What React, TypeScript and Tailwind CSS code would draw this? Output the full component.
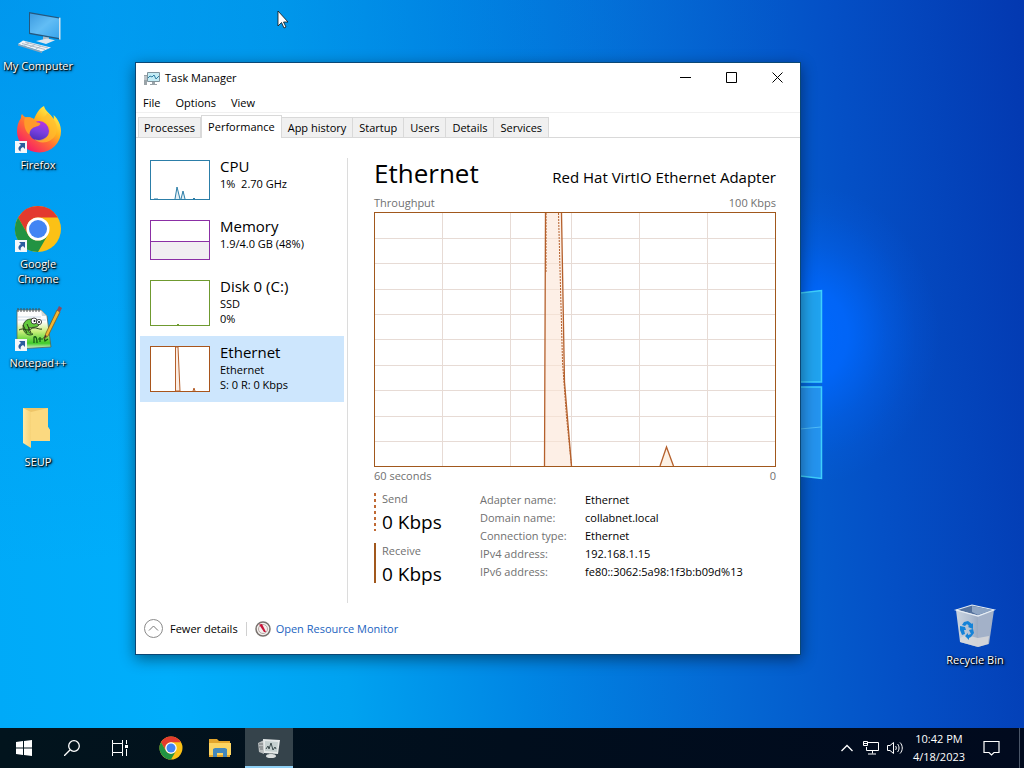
import React from 'react';

const tabs = ['Processes', 'Performance', 'App history', 'Startup', 'Users', 'Details', 'Services'];

const adapterInfo = [
  { label: 'Adapter name:', value: 'Ethernet' },
  { label: 'Domain name:', value: 'collabnet.local' },
  { label: 'Connection type:', value: 'Ethernet' },
  { label: 'IPv4 address:', value: '192.168.1.15' },
  { label: 'IPv6 address:', value: 'fe80::3062:5a98:1f3b:b09d%13' },
];

/* ---------- icons ---------- */

const ShortcutArrow: React.FC = () => (
  <g>
    <rect x="1" y="35" width="12" height="12" fill="#f4f7fa" />
    <path d="M5 37h6v6l-2-2c-2 .8-2.600 2-2.400 4.500C3.800 44 3.600 41 7 39z" fill="#2b5c9e" />
  </g>
);

const ChromeShape: React.FC = () => (
  <g>
    <circle cx="24" cy="24" r="23" fill="#fbc116" />
    <path d="M4.080 12.500A23 23 0 0 1 43.920 12.500H24A11.500 11.500 0 0 0 14.040 29.750z" fill="#e33b2e" />
    <path d="M4.080 12.500A23 23 0 0 0 24 47L33.960 29.750A11.500 11.500 0 0 1 14.040 29.750z" fill="#229342" />
    <circle cx="24" cy="24" r="11.500" fill="#fff" />
    <circle cx="24" cy="24" r="9" fill="#4285f4" />
  </g>
);

const ComputerIcon: React.FC = () => (
  <svg viewBox="0 0 48 48" className="h-12 w-12">
    <defs>
      <linearGradient id="screen" x1="0" y1="0" x2="1" y2="1">
        <stop offset="0" stopColor="#3d9be0" />
        <stop offset="0.500" stopColor="#62bdf5" />
        <stop offset="1" stopColor="#3aa5ec" />
      </linearGradient>
    </defs>
    <path d="M15 5l31 5.500v22L15 27z" fill="#24587f" />
    <path d="M16 6.500l29 5v19.500L16 25.700z" fill="url(#screen)" />
    <path d="M45 10.500l1.500.3v22l-1.500-.3z" fill="#d5e3ec" />
    <path d="M29 29.500l6 1v3.500l-6-1z" fill="#aebbc6" />
    <path d="M22 34l11-2.500 8 1.800-9 3.700z" fill="#dce6ee" />
    <path d="M9 33.500l28 7-9 4L4 37z" fill="#eef2f6" />
    <path d="M4 37l24 7.500v1.500L4 38.500z" fill="#8fa5b8" />
    <path d="M11 35l23 6M8 36.500l23 6M15 36l-5 2.500M21 37.500l-5 2.500M27 39l-5 3" stroke="#9fb0bf" strokeWidth="0.800" />
  </svg>
);

const FirefoxIcon: React.FC = () => (
  <svg viewBox="0 0 48 48" className="h-12 w-12">
    <defs>
      <linearGradient id="fox" x1="0.850" y1="0.100" x2="0.200" y2="0.950">
        <stop offset="0" stopColor="#fff44f" />
        <stop offset="0.350" stopColor="#ffb21f" />
        <stop offset="0.600" stopColor="#ff6b36" />
        <stop offset="1" stopColor="#f5156c" />
      </linearGradient>
      <linearGradient id="globe" x1="0.600" y1="0" x2="0.300" y2="1">
        <stop offset="0" stopColor="#b833e1" />
        <stop offset="0.500" stopColor="#7a3fe0" />
        <stop offset="1" stopColor="#4a2fb5" />
      </linearGradient>
    </defs>
    <path d="M30 0c1 5 7 8 9.500 13 .5-1 .3-2.500 0-4 4.500 4 7.500 10 7.500 16A22 21 0 0 1 3 26c0-6 1-10 4-14 0-1 0-3 1-4 1 2 3 3 4 3.500 3-.5 6 0 8 1.500C22 9 24 3 30 0z" fill="url(#fox)" />
    <circle cx="25" cy="25" r="10" fill="url(#globe)" />
    <path d="M11 11.500c5-1 9 1 12 5 2 0 3 .5 3.500 1.500-1.500 2.500-5 2.500-7 3.500-2 1.500-4 3-4 7C11 26 9 17 11 11.500z" fill="#ff9a2a" />
    <path d="M26 14c4-2 10 2 10 9 0 8-8 13-16 10 6 6 18 4 22-5 3-8-2-17-9-21-1 4-5 4-7 7z" fill="#ffbd2e" opacity="0.700" />
    <ShortcutArrow />
  </svg>
);

const ChromeIcon: React.FC = () => (
  <svg viewBox="0 0 48 48" className="h-12 w-12">
    <ChromeShape />
    <ShortcutArrow />
  </svg>
);

const NotepadIcon: React.FC = () => (
  <svg viewBox="0 0 48 48" className="h-12 w-12">
    <defs>
      <linearGradient id="page" x1="0" y1="0" x2="0" y2="1">
        <stop offset="0.300" stopColor="#fdfdfd" />
        <stop offset="0.550" stopColor="#c9ef7a" />
        <stop offset="0.850" stopColor="#3ecb2b" />
        <stop offset="1" stopColor="#e8f6e0" />
      </linearGradient>
    </defs>
    <path d="M3 6h24l6 6 4 31-34 2z" fill="url(#page)" stroke="#55645a" strokeWidth="0.800" />
    <path d="M27 6l1 6h5z" fill="#cfd8d8" />
    <path d="M4 8V4M7 8V4M10 8V4M13 8V4M16 8V4M19 8V4M22 8V4M25 8V4" stroke="#4a4f55" strokeWidth="1" />
    <path d="M4 13h23M4 16h28" stroke="#b9c8dd" strokeWidth="0.700" />
    <path d="M21 16c-6-3-12 1-12 7s6 10 10 7c-4 0-5-3-4-6 3-1 8 0 10-3z" fill="#62c83d" stroke="#20351c" strokeWidth="0.800" />
    <circle cx="20" cy="17" r="3" fill="#fff" stroke="#222" strokeWidth="0.800" />
    <circle cx="25" cy="18" r="2.600" fill="#fff" stroke="#222" strokeWidth="0.800" />
    <circle cx="20.500" cy="17" r="1" fill="#111" />
    <circle cx="25" cy="18" r="1" fill="#111" />
    <path d="M5 26c5-3 8 2 12-1s8 1 11 0M9 21l4 8M13 20l4 9" fill="none" stroke="#263a17" />
    <path d="M20 39v-6c2-1 3 1 3 6M26 33v5M24 35h5M30 33l1 4 3-2" fill="none" stroke="#0e5714" strokeWidth="1.200" />
    <path d="M30 35l2-6L43 6l3 2-12 24z" fill="#f2b632" stroke="#7b5a1c" strokeWidth="0.800" />
    <path d="M43 6l2-4 3 2-2 4z" fill="#8d4c5f" />
    <path d="M30 35l1-4 2 1z" fill="#333" />
    <ShortcutArrow />
  </svg>
);

const FolderIcon: React.FC = () => (
  <svg viewBox="0 0 48 48" className="h-12 w-12">
    <defs>
      <linearGradient id="folderFront" x1="0" y1="0" x2="1" y2="0">
        <stop offset="0" stopColor="#ffe9a6" />
        <stop offset="1" stopColor="#f7d377" />
      </linearGradient>
    </defs>
    <path d="M9 5h25v19l2 3v11H16z" fill="#eec568" />
    <path d="M17 9l17-4v19l2 3v11H17z" fill="#fbd980" />
    <path d="M9 5l8 4v36l-8-5z" fill="url(#folderFront)" />
  </svg>
);

const RecycleIcon: React.FC = () => (
  <svg viewBox="0 0 48 48" className="h-12 w-12">
    <defs>
      <linearGradient id="bin" x1="0" y1="0" x2="1" y2="0">
        <stop offset="0" stopColor="#c9d3df" />
        <stop offset="0.600" stopColor="#b4c1d3" />
        <stop offset="1" stopColor="#9cabc2" />
      </linearGradient>
    </defs>
    <path d="M5 9l16-5 22 5-16 6z" fill="#54719c" stroke="#e3ebf3" strokeWidth="1.200" />
    <path d="M21 5v6l6 3 15-5z" fill="#8ea5c4" />
    <path d="M5 9l22 6v31L9 41z" fill="url(#bin)" />
    <path d="M27 15l16-6-5 34-11 3z" fill="#a3b1c8" />
    <path d="M9 37l6-3 12 3 11-2-1 8-10 3-18-5z" fill="#dcdcdc" opacity="0.800" />
    <path d="M5 9l22 6 16-6" fill="none" stroke="#e8eef5" strokeWidth="1.200" />
    <g fill="#1583d8">
      <path d="M13 21l4-1 4 3 1-1 0 6-5-2 1-1-2-2-2 2-3-1z" />
      <path d="M9 25l5 1 1 3-2 0 1 4-3 1-2-5z" />
      <path d="M18 29l4-1 1 4-3 4-2 1v2l-4-4 3-3v2l3-1z" />
    </g>
  </svg>
);

const AppIcon: React.FC = () => (
  <svg viewBox="0 0 16 16" className="h-4 w-4">
    <path d="M0 5h3v10H0z" fill="#9aa3a8" />
    <path d="M0 7h3M0 9h3" stroke="#e3e7ea" />
    <path d="M3.500 2.500h12v9h-12z" fill="#c4ecf5" stroke="#80939c" />
    <path d="M4 8l2-2 2 1 2-2 2 4 3-3" fill="none" stroke="#2f7ea3" />
    <path d="M8 12h3v2h2v1H6v-1h2z" fill="#9aa3a8" />
  </svg>
);

const TaskManagerIcon: React.FC = () => (
  <svg viewBox="0 0 24 24" className="h-6 w-6">
    <path d="M1 7l6-3v14l-5-2z" fill="#b9bdbe" />
    <path d="M2 8h4M2 11h4M3 13h3" stroke="#6f7577" />
    <path d="M6 3l17 1-2 14-14-1z" fill="#e5e9e9" />
    <path d="M8 5l13 1-1 10-12-1z" fill="#c5d0d0" />
    <path d="M9 13l2-3 1 3 2-6 2 7 2-3 1 2" fill="none" stroke="#3c4b4d" />
    <path d="M12 17h4v2h-4z" fill="#909899" />
    <ellipse cx="14" cy="20" rx="5" ry="2" fill="#dce0e0" />
  </svg>
);

const ExplorerIcon: React.FC = () => (
  <svg viewBox="0 0 24 24" className="h-6 w-6">
    <path d="M1 4V3h8l2 2h11v16H1z" fill="#e3a52c" />
    <path d="M1 7h22v12H1z" fill="#fcd462" />
    <path d="M5 21v-8l2-1h10l2 1v8h-4v-4H9v4z" fill="#4287bd" />
  </svg>
);

/* ---------- desktop ---------- */

const DesktopIcon: React.FC<{ label: string; children: React.ReactNode }> = ({ label, children }) => (
  <button
    type="button"
    className="flex w-[76px] flex-col items-center text-center text-[11px] leading-[15px] text-white [text-shadow:1px_1px_1px_#000,1px_1px_3px_#000,0_0_2px_rgba(0,0,0,0.6)]"
  >
    {children}
    <span className="mt-[3px] whitespace-pre-line">{label}</span>
  </button>
);

const desktopItems = [
  { label: 'My Computer', icon: <ComputerIcon /> },
  { label: 'Firefox', icon: <FirefoxIcon /> },
  { label: 'Google\nChrome', icon: <ChromeIcon /> },
  { label: 'Notepad++', icon: <NotepadIcon /> },
  { label: 'SEUP', icon: <FolderIcon /> },
];

/* ---------- task manager ---------- */

const resources = [
  {
    name: 'CPU',
    lines: ['1%  2.70 GHz'],
    graph: (
      <svg viewBox="0 0 60 40" className="h-10 w-[60px]">
        <rect x="0.500" y="0.500" width="59" height="39" fill="#fff" stroke="#2c7ea8" />
        <path d="M25 39l2-12 3 12M31 39l2-8 2 8M4 39h4M43 39l1-1 1 1" fill="#e3f0f6" stroke="#2c7ea8" />
      </svg>
    ),
  },
  {
    name: 'Memory',
    lines: ['1.9/4.0 GB (48%)'],
    graph: (
      <svg viewBox="0 0 60 40" className="h-10 w-[60px]">
        <rect x="0.500" y="0.500" width="59" height="39" fill="#fff" stroke="#8b2fa5" />
        <rect x="1" y="22" width="58" height="17" fill="#f1eef2" />
        <path d="M1 21.500h58" stroke="#8b2fa5" />
      </svg>
    ),
  },
  {
    name: 'Disk 0 (C:)',
    lines: ['SSD', '0%'],
    graph: (
      <svg viewBox="0 0 60 46" className="h-[46px] w-[60px]">
        <rect x="0.500" y="0.500" width="59" height="45" fill="#fff" stroke="#6f9a30" />
        <path d="M27 45l1-1 1 1" fill="none" stroke="#6f9a30" />
      </svg>
    ),
  },
  {
    name: 'Ethernet',
    lines: ['Ethernet', 'S: 0 R: 0 Kbps'],
    graph: (
      <svg viewBox="0 0 60 46" className="h-[46px] w-[60px]">
        <rect x="0.500" y="0.500" width="59" height="45" fill="#fff" stroke="#a8551c" />
        <path d="M25.500 45V1h2.500l2 44z" fill="#fdeee4" stroke="#b5602c" />
        <path d="M43 45l1-3 1 3" fill="#fdeee4" stroke="#b5602c" />
      </svg>
    ),
  },
];

const ThroughputChart: React.FC = () => (
  <svg viewBox="0 0 402 255" preserveAspectRatio="none" className="block min-h-0 w-full flex-1" role="img" aria-label="Ethernet throughput">
    <rect x="0.500" y="0.500" width="401" height="254" fill="#fff" />
    <path
      d="M68.500 1v253M136.500 1v253M197.500 1v253M265.500 1v253M333.500 1v253M1 26.500h400M1 51.500h400M1 77.500h400M1 102.500h400M1 127.500h400M1 153.500h400M1 178.500h400M1 204.500h400M1 229.500h400"
      stroke="#e7dbd5"
      fill="none"
    />
    <path d="M170.500 254L171.500 1H187.500L190.500 170L197.500 254z" fill="#fce4d6" fillOpacity="0.600" />
    <path d="M170.500 254L171.500 1M187.500 1L190.500 170L197.500 254" fill="none" stroke="#b5602c" strokeWidth="1.300" />
    <path d="M172 1V60M184.500 1L188.500 150L192.500 205L197.500 254" fill="none" stroke="#b5602c" strokeDasharray="2 1" />
    <path d="M286 254L292.500 235L299.500 254" fill="#fdf1e4" stroke="#b5602c" strokeWidth="1.300" />
    <rect x="0.500" y="0.500" width="401" height="254" fill="none" stroke="#a1581d" />
  </svg>
);

const TaskManager: React.FC = () => (
  <section
    aria-label="Task Manager"
    className="absolute top-[62px] right-[223px] bottom-[73px] left-[135px] flex flex-col border border-[#0b4775] bg-white text-[11px] leading-[15px] text-black shadow-[0_4px_14px_rgba(0,0,0,0.45)]"
  >
    <header className="flex h-[29px] shrink-0 items-center pl-2">
      <AppIcon />
      <h1 className="ml-[5px] flex-1">Task Manager</h1>
      <button type="button" aria-label="Minimize" className="flex h-full w-[45px] items-center justify-center">
        <svg viewBox="0 0 11 11" className="h-[11px] w-[11px]"><path d="M0 5.500h11" stroke="#000" /></svg>
      </button>
      <button type="button" aria-label="Maximize" className="flex h-full w-[46px] items-center justify-center">
        <svg viewBox="0 0 11 11" className="h-[11px] w-[11px]"><path d="M.5.500h10v10H.5z" fill="none" stroke="#000" /></svg>
      </button>
      <button type="button" aria-label="Close" className="flex h-full w-[46px] items-center justify-center">
        <svg viewBox="0 0 11 11" className="h-[11px] w-[11px]"><path d="M.5.500l10 10M10.500.500l-10 10" stroke="#000" /></svg>
      </button>
    </header>

    <nav className="flex h-[21px] shrink-0 items-center gap-[15px] border-b border-[#f0f0f0] pl-[7px]">
      <button type="button">File</button>
      <button type="button">Options</button>
      <button type="button">View</button>
    </nav>

    <div role="tablist" className="flex h-[25px] shrink-0 items-end border-b border-[#d9d9d9] pl-[2px]">
      {tabs.map((tab) =>
        tab === 'Performance' ? (
          <button key={tab} type="button" role="tab" aria-selected="true" className="-mb-px h-[23px] border border-b-0 border-[#d9d9d9] bg-white px-[6px] pb-[2px]">
            {tab}
          </button>
        ) : (
          <button key={tab} type="button" role="tab" aria-selected="false" className="h-5 border-t border-r border-[#d9d9d9] bg-[#f0f0f0] px-[6px] first:border-l first:px-[5px]">
            {tab}
          </button>
        )
      )}
    </div>

    <div className="flex min-h-0 flex-1 pt-5">
      {/* resource list */}
      <div className="mr-[3px] ml-1 flex w-[204px] shrink-0 flex-col">
        <div className="-mt-2 flex flex-col">
          {resources.map((res, i) => (
            <button
              key={res.name}
              type="button"
              className={`flex px-[10px] py-[10px] text-left ${i === 3 ? 'bg-[#cde6fd]' : ''}`}
            >
              {res.graph}
              <span className="ml-[10px] flex h-0 flex-col">
                <span className="-mt-1 text-[15px] leading-5">{res.name}</span>
                {res.lines.map((line) => (
                  <span key={line} className="whitespace-pre">{line}</span>
                ))}
              </span>
            </button>
          ))}
        </div>
      </div>

      {/* adapter details */}
      <main className="flex min-w-0 flex-1 flex-col border-l border-[#dcdcdc] pr-6 pl-[26px]">
        <div className="flex items-baseline justify-between">
          <h2 className="text-[26px] leading-[30px]">Ethernet</h2>
          <p className="text-[15px] leading-5">Red Hat VirtIO Ethernet Adapter</p>
        </div>
        <div className="mt-[7px] mb-[2px] flex justify-between text-[#707070]">
          <span>Throughput</span>
          <span>100 Kbps</span>
        </div>
        <ThroughputChart />
        <div className="mt-px flex justify-between text-[#707070]">
          <span>60 seconds</span>
          <span>0</span>
        </div>
        <div className="mt-2 mb-5 flex">
          <div className="flex w-[106px] shrink-0 flex-col gap-3">
            <div className="flex h-10 gap-[6px]">
              <svg viewBox="0 0 2 40" className="h-10 w-[2px]"><path d="M1 2v38" stroke="#c06a35" strokeWidth="2" strokeDasharray="3 3" /></svg>
              <div>
                <p className="text-[#707070]">Send</p>
                <p className="text-[19px] leading-8">0 Kbps</p>
              </div>
            </div>
            <div className="flex h-10 gap-[6px]">
              <div className="w-[2px] bg-[#a1581d]" />
              <div>
                <p className="text-[#707070]">Receive</p>
                <p className="text-[19px] leading-8">0 Kbps</p>
              </div>
            </div>
          </div>
          <dl className="flex flex-1 flex-col leading-[18px]">
            {adapterInfo.map((row) => (
              <div key={row.label} className="flex">
                <dt className="w-[105px] text-[#707070]">{row.label}</dt>
                <dd>{row.value}</dd>
              </div>
            ))}
          </dl>
        </div>
      </main>
    </div>

    <footer className="flex h-[51px] shrink-0 items-center pl-2">
      <button type="button" className="flex items-center gap-[7px]">
        <svg viewBox="0 0 19 19" className="h-[19px] w-[19px]" fill="none">
          <circle cx="9.500" cy="9.500" r="9" stroke="#8a8a8a" />
          <path d="M5 11.500l4.500-4.500 4.500 4.500" stroke="#777" />
        </svg>
        Fewer details
      </button>
      <span className="mx-2 h-[14px] w-px bg-[#d0d0d0]" />
      <a href="#resource-monitor" className="flex items-center gap-[5px] text-[#1b63c0]">
        <svg viewBox="0 0 16 16" className="h-4 w-4">
          <circle cx="8" cy="8" r="7" fill="#f3f0ee" stroke="#77716d" strokeWidth="1.500" />
          <circle cx="8" cy="8" r="4.500" fill="none" stroke="#b8a7a4" />
          <path d="M4 3.500l3-.5 4 8-2 0z" fill="#c8143a" />
        </svg>
        Open Resource Monitor
      </a>
    </footer>
  </section>
);

const Wallpaper: React.FC = () => (
  <svg viewBox="0 0 24 192" className="absolute top-[289px] right-[200px] h-48 w-6" fill="#2aa8f2">
    <path d="M0 4L21.500 1.500V93H0z" fill="#20a2ee" />
    <path d="M0 98H21.500V189.500L0 187z" fill="#2493ee" />
    <path d="M0 140l21-2" stroke="#4fbcf8" fill="none" />
    <path d="M0 4L21.500 1.500V93H0M0 98H21.500V189.500L0 187" fill="none" stroke="#3fd0fb" strokeWidth="1.500" />
    <path d="M0 95.500h22" stroke="#0668cf" strokeWidth="2" />
  </svg>
);

const Taskbar: React.FC = () => (
  <footer className="flex h-10 shrink-0 items-stretch bg-linear-to-r from-[#02141d] via-[#010e1d] to-[#010a1e] text-white">
    <button type="button" aria-label="Start" className="flex w-12 items-center justify-center">
      <svg viewBox="0 0 16 16" className="h-4 w-4" fill="#fff"><path d="M0 2l7-1v6.500H0zM8 1l8-1v7.500H8zM0 8.500h7V15l-7-1zM8 8.500h8V16l-8-1z" /></svg>
    </button>
    <button type="button" aria-label="Search" className="flex w-12 items-center justify-center">
      <svg viewBox="0 0 16 16" className="h-4 w-4" fill="none" stroke="#fff" strokeWidth="1.300"><circle cx="10" cy="6" r="5.300" /><path d="M6 10l-6 6" /></svg>
    </button>
    <button type="button" aria-label="Task view" className="flex w-12 items-center justify-center">
      <svg viewBox="0 0 16 16" className="h-4 w-4" fill="none" stroke="#fff"><path d="M.5 0v3.500h10V0M.5 16v-3.500h10V16M.5 3.500v9M10.500 3.500v9M14.500 0v4M14.500 9v7" /><path d="M13 5h3v3h-3z" fill="#fff" stroke="none" /></svg>
    </button>
    <button type="button" aria-label="Google Chrome" className="ml-[3px] flex w-12 items-center justify-center">
      <svg viewBox="0 0 48 48" className="h-6 w-6"><ChromeShape /></svg>
    </button>
    <button type="button" aria-label="File Explorer" className="ml-px flex w-12 items-center justify-center">
      <ExplorerIcon />
    </button>
    <button type="button" aria-label="Task Manager" className="ml-px flex w-12 items-center justify-center border-t-2 border-b-2 border-t-transparent border-b-[#8fd0f5] bg-[#35434b]">
      <TaskManagerIcon />
    </button>

    <div className="ml-auto flex items-center">
      <button type="button" aria-label="Show hidden icons" className="flex w-6 justify-center">
        <svg viewBox="0 0 12 8" className="h-2 w-3" fill="none" stroke="#fff" strokeWidth="1.300"><path d="M.5 7L6 1.500 11.500 7" /></svg>
      </button>
      <button type="button" aria-label="Network" className="flex w-6 justify-center">
        <svg viewBox="0 0 16 14" className="h-[14px] w-4" fill="none" stroke="#fff"><path d="M5 1.500h10.500v8H3.500V6M9.500 9.500v3M5 13h8M.5.500h4v4H.5zM.5 2.500h4" /></svg>
      </button>
      <button type="button" aria-label="Volume" className="flex w-6 justify-center">
        <svg viewBox="0 0 17 14" className="h-[14px] w-[17px]" fill="none" stroke="#fff"><path d="M.5 4.500H3L6.500 1.500v11L3 9.500H.5zM8.500 5c1 1 1 3 0 4M10.500 3c2 2 2 6 0 8M13 1.500c3 3 3 8 0 11" /></svg>
      </button>
      <button type="button" className="w-16 text-center text-[11px] leading-[18px] whitespace-nowrap">
        10:42 PM
        <br />
        4/18/2023
      </button>
      <button type="button" aria-label="Notifications" className="flex w-10 justify-center">
        <svg viewBox="0 0 17 17" className="h-[17px] w-[17px]" fill="none" stroke="#fff" strokeWidth="1.200"><path d="M1 1.500h15v11h-5L8.500 15 6 12.500H1z" /></svg>
      </button>
      <button type="button" aria-label="Show desktop" className="ml-2 h-10 w-[5px] border-l border-[#4b5668]" />
    </div>
  </footer>
);

export default function App() {
  return (
    <div className="flex h-screen flex-col overflow-hidden bg-[#0078d7] font-['Open_Sans','Noto_Sans',sans-serif]">
      <div className="relative min-h-0 flex-1 bg-[radial-gradient(130px_150px_at_79%_46%,rgba(0,104,255,0.95)_0%,rgba(0,104,255,0.85)_30%,rgba(0,104,255,0.35)_60%,rgba(0,104,255,0.1)_82%,rgba(0,104,255,0)_100%),radial-gradient(ellipse_at_0%_0%,rgba(0,120,220,0.4)_0%,rgba(0,120,220,0)_55%),linear-gradient(84deg,#00aaf8_0%,#00aefb_16%,#00a2f0_32%,#0086e4_48%,#0469d4_66%,#0450c6_82%,#0338b0_100%)]">
        <div className="flex flex-col items-start pt-[7px]">
          {desktopItems.map((item) => (
            <div key={item.label} className="h-[99px]">
              <DesktopIcon label={item.label}>{item.icon}</DesktopIcon>
            </div>
          ))}
        </div>
        <div className="absolute right-[11px] bottom-[61px]">
          <DesktopIcon label="Recycle Bin"><RecycleIcon /></DesktopIcon>
        </div>
        <Wallpaper />
        <TaskManager />
        <svg viewBox="0 0 12 19" className="absolute top-[10px] left-[277px] h-[19px] w-3">
          <path d="M1 1v15l3.500-3.500L7 18l2-1-2.500-5H11z" fill="#fff" stroke="#111" strokeWidth="0.800" />
        </svg>
      </div>
      <Taskbar />
    </div>
  );
}
